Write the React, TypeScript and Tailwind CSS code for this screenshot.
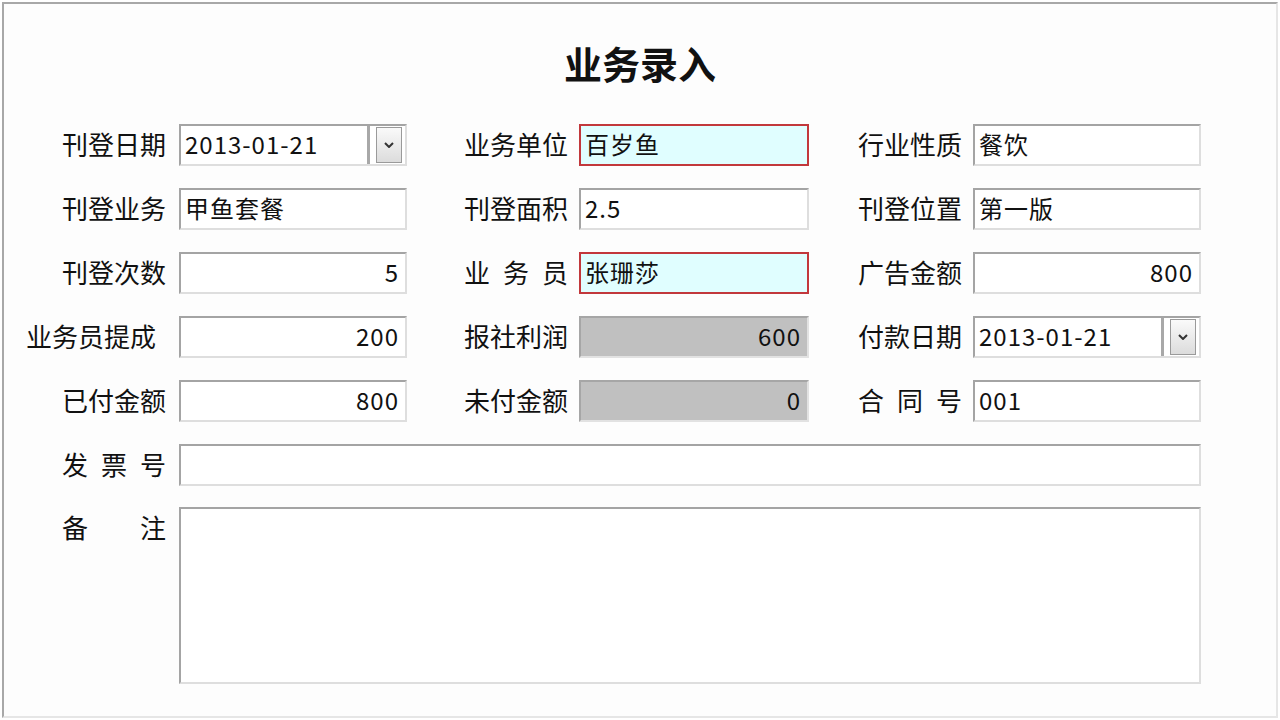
import React from 'react';

const FONT = { fontFamily: '"Noto Sans CJK SC", "Noto Sans", sans-serif' };

type Kind = 'normal' | 'red' | 'grey';

const boxClass = (kind: Kind) => {
  if (kind === 'red') return 'border-2 border-[#c2383c] bg-[#e0feff]';
  if (kind === 'grey')
    return 'border-2 border-t-[#a6a6a6] border-l-[#a6a6a6] border-b-[#e2e2e2] border-r-[#e2e2e2] bg-[#c0c0c0]';
  return 'border-2 border-t-[#a4a4a4] border-l-[#a4a4a4] border-b-[#dedede] border-r-[#dedede] bg-white';
};

const Field = ({ value = '', kind = 'normal', right = false }: { value?: string; kind?: Kind; right?: boolean }) => (
  <div
    className={`h-[42px] flex items-center px-[4px] pb-[3px] text-[24px] tracking-[1px] text-[#111] ${boxClass(kind)} ${right ? 'justify-end pr-[6px]' : ''}`}
  >
    {value}
  </div>
);

const DateField = ({ value }: { value: string }) => (
  <div className="h-[42px] flex border-2 border-t-[#a4a4a4] border-l-[#a4a4a4] border-b-[#dedede] border-r-[#dedede] bg-white">
    <div className="w-[186px] flex items-center px-[4px] pb-[3px] text-[24px] tracking-[1px] text-[#111]">{value}</div>
    <div className="flex-1 flex border-l-[3px] border-l-[#a8a8a8] bg-white">
      <div className="ml-[6px] my-[1px] w-[26px] flex items-center justify-center border border-[#9a9a9a] bg-gradient-to-b from-[#fafafa] to-[#dcdcdc]">
        <svg width="10" height="6" viewBox="0 0 10 6">
          <path d="M1 1 L5 5 L9 1" stroke="#333" strokeWidth="2" fill="none" />
        </svg>
      </div>
    </div>
  </div>
);

const Label = ({ text, spread = false }: { text: string; spread?: boolean }) => (
  <div className="flex justify-end items-center h-[42px] pb-[4px] text-[26px] text-[#111]">
    {spread ? (
      <div className="w-[104px] flex justify-between">
        {text.split('').map((c, i) => (
          <span key={i}>{c}</span>
        ))}
      </div>
    ) : (
      <span className="whitespace-nowrap">{text}</span>
    )}
  </div>
);

export default function App() {
  return (
    <div className="w-[1280px] h-[720px] bg-white p-[2px]" style={FONT}>
      <div className="w-full h-full border-2 border-t-[#a8a8a8] border-l-[#a8a8a8] border-b-[#e6e6e6] border-r-[#e6e6e6] bg-[#fdfdfd]">
        <div className="pt-[34px] h-[50px] box-content text-center text-[38px] leading-[50px] font-bold text-[#111]">
          业务录入
        </div>
        <div className="mt-[36px] grid grid-cols-[175px_228px_172px_230px_164px_228px] gap-y-[22px]">
          <div className="pr-[13px]"><Label text="刊登日期" /></div>
          <DateField value="2013-01-21" />
          <div className="pr-[11px]"><Label text="业务单位" /></div>
          <Field value="百岁鱼" kind="red" />
          <div className="pr-[11px]"><Label text="行业性质" /></div>
          <Field value="餐饮" />

          <div className="pr-[13px]"><Label text="刊登业务" /></div>
          <Field value="甲鱼套餐" />
          <div className="pr-[11px]"><Label text="刊登面积" /></div>
          <Field value="2.5" />
          <div className="pr-[11px]"><Label text="刊登位置" /></div>
          <Field value="第一版" />

          <div className="pr-[13px]"><Label text="刊登次数" /></div>
          <Field value="5" right />
          <div className="pr-[11px]"><Label text="业务员" spread /></div>
          <Field value="张珊莎" kind="red" />
          <div className="pr-[11px]"><Label text="广告金额" /></div>
          <Field value="800" right />

          <div className="pr-[23px]"><Label text="业务员提成" /></div>
          <Field value="200" right />
          <div className="pr-[11px]"><Label text="报社利润" /></div>
          <Field value="600" kind="grey" right />
          <div className="pr-[11px]"><Label text="付款日期" /></div>
          <DateField value="2013-01-21" />

          <div className="pr-[13px]"><Label text="已付金额" /></div>
          <Field value="800" right />
          <div className="pr-[11px]"><Label text="未付金额" /></div>
          <Field value="0" kind="grey" right />
          <div className="pr-[11px]"><Label text="合同号" spread /></div>
          <Field value="001" />

          <div className="pr-[13px]"><Label text="发票号" spread /></div>
          <div className="col-span-5"><Field /></div>

          <div className="pr-[13px] -mt-[1px]">
            <div className="flex justify-end text-[26px] text-[#111]">
              <div className="w-[104px] flex justify-between">
                <span>备</span>
                <span>注</span>
              </div>
            </div>
          </div>
          <div className="col-span-5 -mt-[1px] h-[177px] border-2 border-t-[#a4a4a4] border-l-[#a4a4a4] border-b-[#dedede] border-r-[#dedede] bg-white" />
        </div>
      </div>
    </div>
  );
}
